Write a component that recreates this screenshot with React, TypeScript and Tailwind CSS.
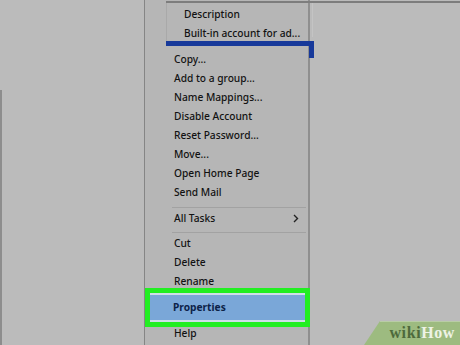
import { ReactNode } from "react"

const topItems = [
    "Copy...",
    "Add to a group...",
    "Name Mappings...",
    "Disable Account",
    "Reset Password...",
    "Move...",
    "Open Home Page",
    "Send Mail",
]

const editItems = ["Cut", "Delete", "Rename"]

function Item({ children }: { children: ReactNode }) {
    return (
        <div className="h-[19px] flex items-center pl-[29px] pr-[10px] text-[#121212]">
            {children}
        </div>
    )
}

function Separator({ top }: { top: string }) {
    return (
        <div className={`pl-[27px] pr-[2px] pb-[1px] ${top}`}>
            <div className="h-[1px] bg-[#a2a2a2]" />
        </div>
    )
}

export default function App() {
    return (
        <div
            className="relative w-[460px] h-[345px] overflow-hidden bg-[#bbbbbb] text-[10.2px] font-medium"
            style={{ fontFamily: '"Noto Sans", "Open Sans", sans-serif' }}
        >
            {/* edge of the window behind */}
            <div className="absolute left-0 top-[90px] bottom-0 w-[2px] bg-[#8d8d8d]" />

            {/* context menu */}
            <div className="absolute left-[144px] top-0 w-[166px] h-full bg-[#b6b6b6] border-l border-[#858585] border-r-2 border-r-[#8f8f8f]">
                <div className="pt-[50px] flex flex-col">
                    {topItems.map(item => (
                        <Item key={item}>{item}</Item>
                    ))}
                    <Separator top="pt-[5px]" />
                    <div className="h-[19px] flex items-center justify-between pl-[29px] pr-[9px] text-[#121212]">
                        <span>All Tasks</span>
                        <svg width="6" height="9" viewBox="0 0 6 9">
                            <path d="M1 1l3.5 3.5L1 8" fill="none" stroke="#222" strokeWidth="1.4" />
                        </svg>
                    </div>
                    <Separator top="pt-[4px]" />
                    {editItems.map(item => (
                        <Item key={item}>{item}</Item>
                    ))}

                    {/* highlighted item */}
                    <div className="relative h-[33px]">
                        <div className="absolute left-0 right-[-2px] top-[-3px] bottom-[-3px] border-[5px] border-[#22ee22]">
                            <div className="h-full bg-[#7aa7d8] border-y-2 border-[#cfdde9] flex items-center pl-[23px] font-bold text-[#0c2248]">
                                Properties
                            </div>
                        </div>
                    </div>

                    <Item>Help</Item>
                </div>
            </div>

            {/* list view behind the menu */}
            <div className="absolute left-[166px] right-0 top-[1px] h-[40px] border-t-2 border-[#7d7d7d] flex">
                <div className="w-[1px] h-full bg-[#a9a9a9]" />
                <div className="w-[145px] pt-[2px] pl-[17px] text-[#121212]">
                    <div className="h-[19px] flex items-center">Description</div>
                    <div className="h-[19px] flex items-center whitespace-nowrap">Built-in account for ad...</div>
                </div>
                <div className="w-[1px] h-[34px] bg-[#c4c4c4]" />
            </div>

            {/* selection edge peeking out */}
            <div className="absolute left-[166px] top-[41px] w-[148px] h-[5px] bg-[#17399a]" />
            <div className="absolute left-[309px] top-[41px] w-[5px] h-[17px] bg-[#17399a]" />

            {/* watermark */}
            <svg className="absolute right-0 bottom-0" width="96" height="24" viewBox="0 0 96 24">
                <polygon points="16,0 96,0 96,24 0,24" fill="#9dbb80" />
                <line x1="16" y1="0.5" x2="96" y2="0.5" stroke="#b9cda6" strokeWidth="1" />
            </svg>
            <div
                className="absolute right-[5px] bottom-[4px] text-[16px] font-bold leading-none tracking-[0.6px]"
                style={{ fontFamily: '"Liberation Serif", serif' }}
            >
                <span className="text-[#4d6a3c]">wiki</span>
                <span className="text-[#eef3e6]">How</span>
            </div>
        </div>
    )
}
